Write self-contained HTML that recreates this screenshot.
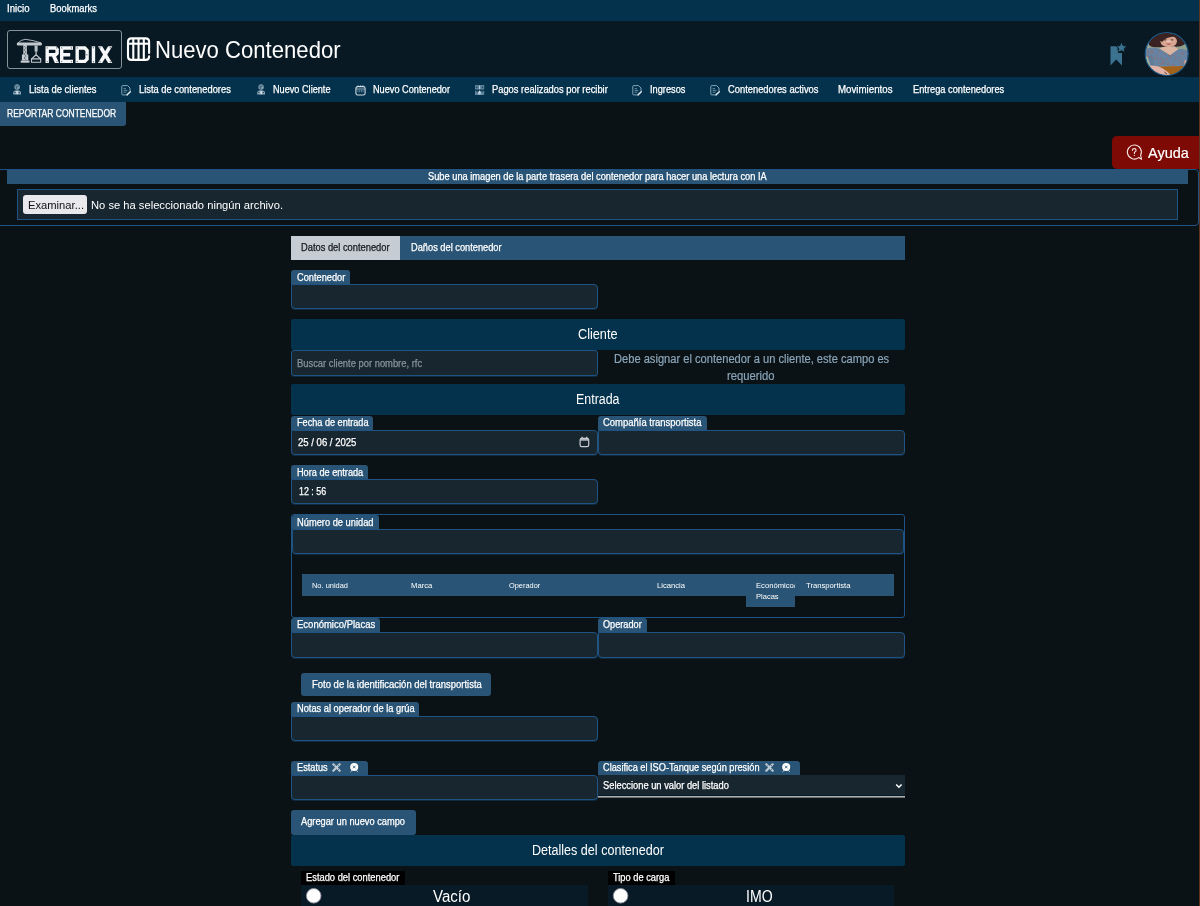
<!DOCTYPE html>
<html lang="es"><head><meta charset="utf-8"><title>Nuevo Contenedor</title>
<style>
html,body{margin:0;padding:0;}
body{width:1200px;height:906px;overflow:hidden;background:#0b1216;font-family:"Liberation Sans",sans-serif;position:relative;}
#p{position:absolute;left:0;top:0;width:1200px;height:906px;overflow:hidden;}
#p>div{position:absolute;box-sizing:border-box;}
#p>svg{position:absolute;overflow:visible;}
.t{position:absolute;white-space:nowrap;transform-origin:0 50%;font-family:"Liberation Sans",sans-serif;}
</style></head><body><div id="p">
<div style="left:0px;top:0px;width:1200px;height:21px;background:#04324c;"></div>
<div style="left:0px;top:21px;width:1200px;height:57px;background:#081924;"></div>
<div style="left:0px;top:77px;width:1200px;height:25px;background:#04324c;"></div>
<div style="left:0px;top:102px;width:126px;height:24px;background:#295475;border-radius:0 0 3px 0;"></div>
<div style="left:7px;top:30px;width:115px;height:39px;background:transparent;border:1px solid #87929a;border-radius:3px;"></div>
<div style="left:1112px;top:136px;width:87px;height:33px;background:#7d0a04;border-radius:5px 0 0 5px;"></div>
<div style="left:-2px;top:169px;width:1201px;height:57px;background:transparent;border:1px solid #1f5383;border-radius:0 4px 4px 0;"></div>
<div style="left:7px;top:170px;width:1181px;height:14px;background:#295475;"></div>
<div style="left:17px;top:189px;width:1161px;height:31px;background:#182630;border:1px solid #1f5383;"></div>
<div style="left:23px;top:195px;width:64px;height:19px;background:#e9e9ed;border-radius:3px;"></div>
<div style="left:291px;top:236px;width:614px;height:24px;background:#295475;"></div>
<div style="left:291px;top:236px;width:109px;height:24px;background:#c6ccd4;"></div>
<div style="left:291px;top:270px;width:59px;height:14px;background:#295475;border-radius:3px 3px 0 0;"></div>
<div style="left:291px;top:284px;width:307px;height:25px;background:#182630;border:1px solid #1f5383;border-radius:0px 4px 4px 4px;box-shadow:0 1px 0 0 rgba(31,85,134,0.35);"></div>
<div style="left:291px;top:319px;width:614px;height:31px;background:#04324c;border-radius:2px;"></div>
<div style="left:291px;top:350px;width:307px;height:26px;background:#182630;border:1px solid #1f5383;border-radius:3px 3px 3px 3px;box-shadow:0 1px 0 0 rgba(31,85,134,0.35);"></div>
<div style="left:291px;top:384px;width:614px;height:31px;background:#04324c;border-radius:2px;"></div>
<div style="left:291px;top:416px;width:82px;height:14px;background:#295475;border-radius:3px 3px 0 0;"></div>
<div style="left:291px;top:430px;width:307px;height:25px;background:#182630;border:1px solid #1f5383;border-radius:0px 4px 4px 4px;box-shadow:0 1px 0 0 rgba(31,85,134,0.35);"></div>
<div style="left:598px;top:416px;width:108.5px;height:14px;background:#295475;border-radius:3px 3px 0 0;"></div>
<div style="left:598px;top:430px;width:307px;height:25px;background:#182630;border:1px solid #1f5383;border-radius:0px 4px 4px 4px;box-shadow:0 1px 0 0 rgba(31,85,134,0.35);"></div>
<div style="left:291px;top:465px;width:77px;height:14px;background:#295475;border-radius:3px 3px 0 0;"></div>
<div style="left:291px;top:479px;width:307px;height:25px;background:#182630;border:1px solid #1f5383;border-radius:0px 4px 4px 4px;box-shadow:0 1px 0 0 rgba(31,85,134,0.35);"></div>
<div style="left:291px;top:514px;width:614px;height:104px;background:transparent;border:1px solid #1f5383;border-radius:3px;"></div>
<div style="left:292px;top:515px;width:86.7px;height:14px;background:#295475;border-radius:3px 3px 0 0;"></div>
<div style="left:292px;top:529px;width:612px;height:25px;background:#182630;border:1px solid #1f5383;border-radius:0px 4px 4px 4px;box-shadow:0 1px 0 0 rgba(31,85,134,0.35);"></div>
<div style="left:302px;top:574px;width:592px;height:22px;background:#295475;"></div>
<div style="left:745.5px;top:574px;width:49.3px;height:33px;background:#295475;"></div>
<div style="left:291px;top:618px;width:89px;height:14px;background:#295475;border-radius:3px 3px 0 0;"></div>
<div style="left:291px;top:632px;width:307px;height:26px;background:#182630;border:1px solid #1f5383;border-radius:0px 4px 4px 4px;box-shadow:0 1px 0 0 rgba(31,85,134,0.35);"></div>
<div style="left:598px;top:618px;width:48.5px;height:14px;background:#295475;border-radius:3px 3px 0 0;"></div>
<div style="left:598px;top:632px;width:307px;height:26px;background:#182630;border:1px solid #1f5383;border-radius:0px 4px 4px 4px;box-shadow:0 1px 0 0 rgba(31,85,134,0.35);"></div>
<div style="left:301px;top:673px;width:190px;height:23px;background:#295475;border-radius:3px;"></div>
<div style="left:291px;top:702px;width:128.2px;height:14px;background:#295475;border-radius:3px 3px 0 0;"></div>
<div style="left:291px;top:716px;width:307px;height:25px;background:#182630;border:1px solid #1f5383;border-radius:0px 4px 4px 4px;box-shadow:0 1px 0 0 rgba(31,85,134,0.35);"></div>
<div style="left:291px;top:761px;width:76.5px;height:14px;background:#295475;border-radius:3px 3px 0 0;"></div>
<div style="left:291px;top:775px;width:307px;height:25px;background:#182630;border:1px solid #1f5383;border-radius:0px 4px 4px 4px;box-shadow:0 1px 0 0 rgba(31,85,134,0.35);"></div>
<div style="left:598px;top:761px;width:202px;height:14px;background:#295475;border-radius:3px 3px 0 0;"></div>
<div style="left:598px;top:775px;width:307px;height:20px;background:#182630;"></div>
<div style="left:598px;top:795px;width:307px;height:1px;background:#061a28;"></div>
<div style="left:598px;top:796px;width:307px;height:1px;background:#a9abad;"></div>
<div style="left:598px;top:797px;width:307px;height:1px;background:#6f7274;"></div>
<div style="left:291px;top:810px;width:124.5px;height:24.5px;background:#295475;border-radius:3px;"></div>
<div style="left:291px;top:835px;width:614px;height:31px;background:#04324c;border-radius:2px;"></div>
<div style="left:301px;top:871px;width:104px;height:14px;background:#000;"></div>
<div style="left:301px;top:885px;width:287px;height:21px;background:#081a26;"></div>
<div style="left:608px;top:871px;width:67px;height:14px;background:#000;"></div>
<div style="left:608px;top:885px;width:286px;height:21px;background:#081a26;"></div>
<div style="left:1199px;top:0px;width:1px;height:906px;background:#5e3420;"></div>
<svg style="left:0px;top:0px" width="60" height="80" viewBox="0 0 60 80">
<g fill="none" stroke="#c3c9ce" stroke-linecap="round" stroke-linejoin="round">
<path d="M18.2,44.1 H40.5" stroke-width="3"/>
<path d="M17.8,43 Q21,39.6 25.3,39.3 Q33,40.2 40.8,42.8" stroke-width="0.9"/>
<path d="M25.1,45 V60" stroke-width="3.6" stroke-linecap="butt"/>
<path d="M25.1,54.5 V60.5" stroke-width="6.4" stroke-linecap="butt"/>
<path d="M21.6,61.7 H28.6" stroke-width="2.2"/>
<path d="M36.1,45.5 V51.5" stroke-width="3" stroke-linecap="butt" stroke="#b9c0c5"/>
<path d="M36.1,51.5 L36.1,54.8 M36.1,54.8 L31.6,58.9 M36.1,54.8 L40.6,58.9" stroke-width="1.2"/>
<rect x="31.5" y="58.9" width="9.2" height="3.4" stroke-width="1.1"/>
</g>
<g stroke="#0a1a24" stroke-width="0.6" fill="none" opacity="0.75">
<path d="M24,46 L26.2,48 L24,50 L26.2,52 L24,54 L26.2,56 L24,58 L26.2,60"/>
</g></svg>
<svg style="left:0px;top:0px" width="125" height="80" viewBox="0 0 125 80">
<g fill="none" stroke="#f6f7f8" stroke-width="3.4" stroke-linejoin="miter" stroke-linecap="butt">
<path d="M47.2,63.1 V48 H55.6 L57.1,49.5 V53.2 L55.6,54.7 H48"/>
<path d="M73,48 H61.7 V61.4 H73 M62,54.7 H70.2" />
<path d="M77.2,48 H84.8 L87.1,50.4 V59 L84.8,61.4 H77.2 Z"/>
<path d="M93.45,46.3 V63.1"/>
</g>
<g fill="#f6f7f8">
<polygon points="51.6,55.5 55.6,55.5 59,63.1 54.8,63.1"/>
<polygon points="98,46.3 102.2,46.3 112.3,63.1 108.1,63.1"/>
<polygon points="112.3,46.3 108.1,46.3 98,63.1 102.2,63.1"/>
</g>
<g fill="#66727b">
<circle cx="47.2" cy="47.9" r="0.7"/><circle cx="47.2" cy="61.6" r="0.7"/><circle cx="56.6" cy="47.9" r="0.7"/><circle cx="57" cy="61.6" r="0.7"/>
<circle cx="61.7" cy="47.9" r="0.7"/><circle cx="61.7" cy="61.6" r="0.7"/><circle cx="71.5" cy="47.9" r="0.7"/><circle cx="71.5" cy="61.6" r="0.7"/>
<circle cx="77.2" cy="47.9" r="0.7"/><circle cx="77.2" cy="61.6" r="0.7"/><circle cx="86.9" cy="54.7" r="0.7"/>
<circle cx="93.45" cy="47.7" r="0.7"/><circle cx="93.45" cy="61.7" r="0.7"/>
<circle cx="100" cy="47.7" r="0.7"/><circle cx="110.3" cy="47.7" r="0.7"/><circle cx="100" cy="61.7" r="0.7"/><circle cx="110.3" cy="61.7" r="0.7"/>
</g></svg>
<svg style="left:0px;top:0px" width="160" height="80" viewBox="0 0 160 80"><g fill="none" stroke="#fff" stroke-width="2.1" stroke-linecap="round">
<path d="M149.1,53 V41.9 Q149.1,38.4 145.6,38.4 H131.5 Q128,38.4 128,41.9 V56.4 Q128,59.9 131.5,59.9 H145.6 Q149.1,59.9 149.1,56.4 V56.2"/>
<path d="M128.5,43.7 H148.6" stroke-linecap="butt"/>
<path d="M133.3,39 V59.3 M138.55,39 V59.3 M143.8,39 V59.3" stroke-linecap="butt"/>
</g></svg>
<svg style="left:0px;top:0px" width="1200" height="80" viewBox="0 0 1200 80"><g fill="#3b728f">
<path d="M1110.5,46.3 H1117 L1118.5,53 L1122,53 V65.5 L1116.2,59.5 L1110.5,65.5 Z"/>
<polygon points="1121.5,42.2 1123.1,45.7 1126.9,46.1 1124.1,48.7 1124.9,52.5 1121.5,50.6 1118.1,52.5 1118.9,48.7 1116.1,46.1 1119.9,45.7" stroke="#091a25" stroke-width="0.8"/>
</g></svg>
<svg style="left:12.8px;top:84.1px" width="9" height="11" viewBox="0 0 9 11"><g fill="#a9c0cf"><ellipse cx="4.1" cy="3" rx="2.75" ry="2.7" fill-opacity="0.8"/><path d="M0.2,10.5 V8.9 Q0.2,6.5 4.1,6.3 Q8,6.5 8,8.9 V10.5 Z" fill-opacity="0.85"/></g><path d="M1.8,2.1 H6.4" stroke="#04324c" stroke-width="0.8" stroke-opacity="0.8"/><g fill="#04324c" fill-opacity="0.75"><circle cx="3.5" cy="3.9" r="0.8"/><circle cx="1.8" cy="8.4" r="0.75"/><circle cx="6.3" cy="8.4" r="0.75"/></g><path d="M4.1,7 V10.2" stroke="#eef3f6" stroke-width="1.1"/></svg>
<svg style="left:121px;top:84.8px" width="10" height="11" viewBox="0 0 10 11"><g fill="none" stroke="#8fb0c4" stroke-width="0.9" stroke-linejoin="round"><path d="M5.2,9.9 H1.6 Q0.8,9.9 0.8,9.1 V1.4 Q0.8,0.6 1.6,0.6 H6.6 L9,3 V6.3"/><path d="M2.6,3.6 H5 M2.6,5.4 H6.4 M2.6,7.2 H5.4" stroke-width="0.8" stroke="#7fa2b8"/></g><path d="M6,9.9 L9.3,6.8" stroke="#dfe8ee" stroke-width="1.5" stroke-linecap="round"/></svg>
<svg style="left:256.8px;top:84.1px" width="9" height="11" viewBox="0 0 9 11"><g fill="#a9c0cf"><ellipse cx="4.1" cy="3" rx="2.75" ry="2.7" fill-opacity="0.8"/><path d="M0.2,10.5 V8.9 Q0.2,6.5 4.1,6.3 Q8,6.5 8,8.9 V10.5 Z" fill-opacity="0.85"/></g><path d="M1.8,2.1 H6.4" stroke="#04324c" stroke-width="0.8" stroke-opacity="0.8"/><g fill="#04324c" fill-opacity="0.75"><circle cx="3.5" cy="3.9" r="0.8"/><circle cx="1.8" cy="8.4" r="0.75"/><circle cx="6.3" cy="8.4" r="0.75"/></g><path d="M4.1,7 V10.2" stroke="#eef3f6" stroke-width="1.1"/></svg>
<svg style="left:354.5px;top:84.8px" width="11" height="11" viewBox="0 0 11 11"><g fill="none" stroke="#cfdae2" stroke-width="1.1"><rect x="0.9" y="1.6" width="9.2" height="8.4" rx="1.8"/><path d="M1,4 H10" stroke-width="0.9" stroke="#a9bccb"/><path d="M3.1,0.4 V2 M5.5,0.4 V2 M7.9,0.4 V2" stroke-width="1.2"/></g><path d="M3,5 V7.3 M4.7,5 V7.3 M6.4,5 V7.3 M8,5 V7.3" stroke="#6f95ad" stroke-width="0.8"/></svg>
<svg style="left:474.9px;top:85px" width="10" height="10" viewBox="0 0 10 10"><g fill="#7fa3ba" fill-opacity="0.75"><rect x="0" y="0.1" width="9.2" height="4.4"/><rect x="0" y="5.9" width="9.2" height="4"/></g><g fill="#03314b" fill-opacity="0.7"><circle cx="1.7" cy="2.3" r="0.9"/><circle cx="7.4" cy="2.3" r="0.9"/><path d="M1.2,6 L3.2,6 L2,8 Z M8,6 L6,6 L7.2,8 Z"/></g><path d="M4.6,0.6 V4.2 M4.6,5.6 V9.6 M3,9.5 L4.6,6.3 L6.2,9.5" stroke="#dbe6ee" stroke-width="0.9" fill="none" stroke-opacity="0.85"/></svg>
<svg style="left:632.3px;top:84.8px" width="10" height="11" viewBox="0 0 10 11"><g fill="none" stroke="#8fb0c4" stroke-width="0.9" stroke-linejoin="round"><path d="M5.2,9.9 H1.6 Q0.8,9.9 0.8,9.1 V1.4 Q0.8,0.6 1.6,0.6 H6.6 L9,3 V6.3"/><path d="M2.6,3.6 H5 M2.6,5.4 H6.4 M2.6,7.2 H5.4" stroke-width="0.8" stroke="#7fa2b8"/></g><path d="M6,9.9 L9.3,6.8" stroke="#dfe8ee" stroke-width="1.5" stroke-linecap="round"/></svg>
<svg style="left:710px;top:84.8px" width="10" height="11" viewBox="0 0 10 11"><g fill="none" stroke="#8fb0c4" stroke-width="0.9" stroke-linejoin="round"><path d="M5.2,9.9 H1.6 Q0.8,9.9 0.8,9.1 V1.4 Q0.8,0.6 1.6,0.6 H6.6 L9,3 V6.3"/><path d="M2.6,3.6 H5 M2.6,5.4 H6.4 M2.6,7.2 H5.4" stroke-width="0.8" stroke="#7fa2b8"/></g><path d="M6,9.9 L9.3,6.8" stroke="#dfe8ee" stroke-width="1.5" stroke-linecap="round"/></svg>
<svg style="left:1126px;top:144px" width="18" height="18" viewBox="0 0 18 18"><g fill="none" stroke="#f7e6e4" stroke-width="1.1" stroke-linecap="round" stroke-linejoin="round"><path d="M12.6,13.6 A7,7 0 1 1 14.6,11.2 L15.6,15.3 Z"/><path d="M6.4,6.4 Q6.5,4.6 8.3,4.6 Q10.1,4.6 10.1,6.2 Q10.1,7.3 8.9,8 Q8.3,8.4 8.3,9.4"/><path d="M8.3,11.3 V11.5"/></g></svg>
<svg style="left:579px;top:436px" width="11" height="12" viewBox="0 0 11 12"><g fill="none" stroke="#c9cdd1"><rect x="1.1" y="2.3" width="8.6" height="8.4" rx="1.6" stroke-width="1.2"/><path d="M1.2,3.9 H9.6" stroke-width="1.5"/><path d="M3.1,0.8 V2.4 M7.7,0.8 V2.4" stroke-width="1.3"/></g></svg>
<svg style="left:331.8px;top:763px" width="9" height="9" viewBox="0 0 9 9"><g stroke="#bfcbd4" stroke-width="2.2" stroke-linecap="round" fill="none"><path d="M1.3,1.3 L7.7,7.7"/><path d="M7.7,1.3 L1.3,7.7"/></g><g fill="#295475"><circle cx="2.7" cy="2.7" r="0.5"/><circle cx="6.3" cy="6.3" r="0.5"/><circle cx="6.6" cy="2.4" r="0.5"/></g></svg>
<svg style="left:349.7px;top:763.2px" width="9" height="9" viewBox="0 0 9 9"><circle cx="4.2" cy="4" r="4" fill="#fff"/><path d="M2.9,2.7 L5.5,5.3 M5.5,2.7 L2.9,5.3" stroke="#4a6f8c" stroke-width="1" /><path d="M0.6,8.6 L2.2,7.4 M7.8,8.6 L6.2,7.4" stroke="#e8eef2" stroke-width="0.9"/></svg>
<svg style="left:764.6px;top:763px" width="9" height="9" viewBox="0 0 9 9"><g stroke="#bfcbd4" stroke-width="2.2" stroke-linecap="round" fill="none"><path d="M1.3,1.3 L7.7,7.7"/><path d="M7.7,1.3 L1.3,7.7"/></g><g fill="#295475"><circle cx="2.7" cy="2.7" r="0.5"/><circle cx="6.3" cy="6.3" r="0.5"/><circle cx="6.6" cy="2.4" r="0.5"/></g></svg>
<svg style="left:782px;top:763.2px" width="9" height="9" viewBox="0 0 9 9"><circle cx="4.2" cy="4" r="4" fill="#fff"/><path d="M2.9,2.7 L5.5,5.3 M5.5,2.7 L2.9,5.3" stroke="#4a6f8c" stroke-width="1" /><path d="M0.6,8.6 L2.2,7.4 M7.8,8.6 L6.2,7.4" stroke="#e8eef2" stroke-width="0.9"/></svg>
<svg style="left:895px;top:783px" width="8" height="6" viewBox="0 0 8 6"><path d="M1.2,1.5 L3.9,4.2 L6.6,1.5" fill="none" stroke="#fff" stroke-width="1.5"/></svg>
<svg style="left:1140px;top:28px" width="54" height="54" viewBox="0 0 54 54">
<defs><clipPath id="avc"><circle cx="26.7" cy="26" r="21.3"/></clipPath>
<clipPath id="blc"><path d="M4,21.5 C9,19.5 16,19.3 20,21 L30,27.3 L38,21.5 C42,20.3 46,21.5 50,24 L50,38.3 L4,38.6 Z"/></clipPath>
<filter id="avb" x="-10%" y="-10%" width="120%" height="120%"><feGaussianBlur stdDeviation="0.55"/></filter></defs>
<g clip-path="url(#avc)"><g filter="url(#avb)">
<rect x="0" y="0" width="54" height="54" fill="#97a596"/>
<rect x="36" y="14" width="16" height="9" fill="#8ea18b"/>
<path d="M9,16.5 C8.5,10 14,5.2 24,4.8 C34,4.4 42,8 45.3,15.3 C44,18.2 38,19 34,18.5 L20,19.2 C15,19.6 10,19.3 9,16.5 Z" fill="#3a2421"/>
<ellipse cx="28.7" cy="13.2" rx="8.3" ry="6" fill="#d6a692"/>
<path d="M19.5,13 C20,6.5 29,5.2 37,8.6 C31.5,8.6 26,9.2 22.4,13.8 Z" fill="#3a2421"/>
<path d="M36.8,9 C38.5,11 38.3,15 36.6,17.5 C37.5,14 37.3,11.5 36.8,9 Z" fill="#3a2421"/>
<ellipse cx="25.3" cy="11.8" rx="1.5" ry="0.6" fill="#5a3a33"/><ellipse cx="32" cy="11.8" rx="1.5" ry="0.6" fill="#5a3a33"/>
<ellipse cx="28.6" cy="13.3" rx="2.6" ry="1" fill="#e6c3b8"/>
<ellipse cx="28.7" cy="16.1" rx="2.4" ry="0.9" fill="#c06a62"/>
<path d="M22.5,19 L34.5,18.6 L38.5,21.6 L30,27.6 L19.5,21 Z" fill="#dcb4a2"/>
<path d="M4,21.5 C9,19.5 16,19.3 20,21 L30,27.3 L38,21.5 C42,20.3 46,21.5 50,24 L50,38.3 L4,38.6 Z" fill="#6783a1"/>
<path d="M4,30 L12,27 L14,38.6 L4,38.6 Z" fill="#5b7796" opacity="0.7"/>
<g clip-path="url(#blc)" fill="#ab6152" opacity="0.85"><circle cx="19.2" cy="23.1" r="0.6"/><circle cx="33.6" cy="21.8" r="0.6"/><circle cx="28.6" cy="26.9" r="0.6"/><circle cx="7.6" cy="29.4" r="0.6"/><circle cx="6.6" cy="28.1" r="0.6"/><circle cx="8.1" cy="22.1" r="0.6"/><circle cx="23.7" cy="35.0" r="0.6"/><circle cx="10.4" cy="24.4" r="0.6"/><circle cx="32.6" cy="37.1" r="0.6"/><circle cx="30.4" cy="27.4" r="0.6"/><circle cx="48.0" cy="21.3" r="0.6"/><circle cx="42.8" cy="25.6" r="0.6"/><circle cx="11.3" cy="22.6" r="0.6"/><circle cx="18.6" cy="34.8" r="0.6"/><circle cx="13.0" cy="30.7" r="0.6"/><circle cx="33.1" cy="27.0" r="0.6"/><circle cx="29.1" cy="21.6" r="0.6"/><circle cx="7.6" cy="24.1" r="0.6"/><circle cx="34.9" cy="28.0" r="0.6"/><circle cx="18.8" cy="30.7" r="0.6"/><circle cx="24.9" cy="25.7" r="0.6"/><circle cx="40.0" cy="32.7" r="0.6"/><circle cx="15.7" cy="30.6" r="0.6"/><circle cx="28.1" cy="35.8" r="0.6"/><circle cx="37.1" cy="25.5" r="0.6"/><circle cx="48.1" cy="22.6" r="0.6"/><circle cx="23.4" cy="33.7" r="0.6"/><circle cx="11.7" cy="29.1" r="0.6"/><circle cx="6.7" cy="32.2" r="0.6"/><circle cx="38.6" cy="30.5" r="0.6"/><circle cx="43.5" cy="26.0" r="0.6"/><circle cx="35.6" cy="30.9" r="0.6"/><circle cx="30.5" cy="28.5" r="0.6"/><circle cx="42.0" cy="37.0" r="0.6"/><circle cx="25.9" cy="32.1" r="0.6"/><circle cx="7.7" cy="32.8" r="0.6"/><circle cx="33.5" cy="37.9" r="0.6"/><circle cx="41.2" cy="25.5" r="0.6"/><circle cx="22.0" cy="32.2" r="0.6"/><circle cx="6.0" cy="28.6" r="0.6"/><circle cx="12.4" cy="22.5" r="0.6"/><circle cx="7.6" cy="33.9" r="0.6"/><circle cx="10.7" cy="24.8" r="0.6"/><circle cx="22.2" cy="35.7" r="0.6"/><circle cx="8.5" cy="28.4" r="0.6"/><circle cx="29.2" cy="36.0" r="0.6"/><circle cx="41.0" cy="35.6" r="0.6"/><circle cx="17.3" cy="27.8" r="0.6"/><circle cx="20.8" cy="36.0" r="0.6"/><circle cx="47.1" cy="23.1" r="0.6"/><circle cx="12.8" cy="24.6" r="0.6"/><circle cx="15.3" cy="29.0" r="0.6"/><circle cx="30.9" cy="25.1" r="0.6"/><circle cx="5.2" cy="27.8" r="0.6"/><circle cx="21.2" cy="30.4" r="0.6"/><circle cx="46.9" cy="32.6" r="0.6"/><circle cx="27.7" cy="31.3" r="0.6"/><circle cx="34.8" cy="21.4" r="0.6"/><circle cx="44.6" cy="34.1" r="0.6"/><circle cx="43.5" cy="34.5" r="0.6"/></g>
<path d="M5,29 L7.5,28.5 L10.5,37.5 L8,38 Z" fill="#a3b49f"/>
<path d="M44.5,32.5 L47.5,31.5 L47,38 L44.2,38.5 Z" fill="#d9a794"/>
<path d="M19,38.6 L43.5,38 L42.5,41.5 L31.5,47.5 L27,44 Z" fill="#a3621c"/>
<path d="M9.5,37.6 C14,37.2 19,38.5 22.5,40.2 C26,42.3 29.5,45 30.5,47.5 L20,47.5 C15,45.5 11,42 9.5,37.6 Z" fill="#e2b4a7"/>
<path d="M24.5,44 L27,46.3" stroke="#3b2a25" stroke-width="0.9"/>
</g></g>
<circle cx="26.7" cy="26" r="21.5" fill="none" stroke="#1d5985" stroke-width="1.1"/></svg>
<svg style="left:0;top:880px" width="1200" height="26" viewBox="0 880 1200 26"><g fill="#fff" stroke="#8f8f9d" stroke-width="0.9"><circle cx="313.7" cy="895.8" r="7.3"/><circle cx="620.6" cy="895.8" r="7.3"/></g></svg>
<span class="t" style="left:296.5px;top:272.94px;font-size:10px;line-height:10px;color:#fff;transform:scaleX(0.9241);-webkit-text-stroke:0.25px currentColor;">Contenedor</span>
<span class="t" style="left:296.5px;top:417.94px;font-size:10px;line-height:10px;color:#fff;transform:scaleX(0.9121);-webkit-text-stroke:0.25px currentColor;">Fecha de entrada</span>
<span class="t" style="left:602.8px;top:417.94px;font-size:10px;line-height:10px;color:#fff;transform:scaleX(0.9466);-webkit-text-stroke:0.25px currentColor;">Compañía transportista</span>
<span class="t" style="left:296.5px;top:467.94px;font-size:10px;line-height:10px;color:#fff;transform:scaleX(0.9159);-webkit-text-stroke:0.25px currentColor;">Hora de entrada</span>
<span class="t" style="left:296.8px;top:517.93px;font-size:10px;line-height:10px;color:#fff;transform:scaleX(0.9297);-webkit-text-stroke:0.25px currentColor;">Número de unidad</span>
<span class="t" style="left:296.5px;top:619.93px;font-size:10px;line-height:10px;color:#fff;transform:scaleX(0.9506);-webkit-text-stroke:0.25px currentColor;">Económico/Placas</span>
<span class="t" style="left:602.8px;top:619.93px;font-size:10px;line-height:10px;color:#fff;transform:scaleX(0.9160);-webkit-text-stroke:0.25px currentColor;">Operador</span>
<span class="t" style="left:296.5px;top:703.93px;font-size:10px;line-height:10px;color:#fff;transform:scaleX(0.9278);-webkit-text-stroke:0.25px currentColor;">Notas al operador de la grúa</span>
<span class="t" style="left:296.5px;top:762.93px;font-size:10px;line-height:10px;color:#fff;transform:scaleX(0.9203);-webkit-text-stroke:0.25px currentColor;">Estatus</span>
<span class="t" style="left:602.8px;top:762.93px;font-size:10px;line-height:10px;color:#fff;transform:scaleX(0.9201);-webkit-text-stroke:0.25px currentColor;">Clasifica el ISO-Tanque según presión</span>
<span class="t" style="left:7px;top:3.94px;font-size:10px;line-height:10px;color:#fff;transform:scaleX(0.9632);-webkit-text-stroke:0.25px currentColor;">Inicio</span>
<span class="t" style="left:49.8px;top:3.94px;font-size:10px;line-height:10px;color:#fff;transform:scaleX(0.9397);-webkit-text-stroke:0.25px currentColor;">Bookmarks</span>
<span class="t" style="left:154.9px;top:38.08px;font-size:24px;line-height:24px;color:#fff;transform:scaleX(0.9212);">Nuevo Contenedor</span>
<span class="t" style="left:28.7px;top:85.44px;font-size:10px;line-height:10px;color:#fff;transform:scaleX(0.9412);-webkit-text-stroke:0.25px currentColor;">Lista de clientes</span>
<span class="t" style="left:138.7px;top:85.44px;font-size:10px;line-height:10px;color:#fff;transform:scaleX(0.9329);-webkit-text-stroke:0.25px currentColor;">Lista de contenedores</span>
<span class="t" style="left:272.5px;top:85.44px;font-size:10px;line-height:10px;color:#fff;transform:scaleX(0.9154);-webkit-text-stroke:0.25px currentColor;">Nuevo Cliente</span>
<span class="t" style="left:372.5px;top:85.44px;font-size:10px;line-height:10px;color:#fff;transform:scaleX(0.9172);-webkit-text-stroke:0.25px currentColor;">Nuevo Contenedor</span>
<span class="t" style="left:491.7px;top:85.44px;font-size:10px;line-height:10px;color:#fff;transform:scaleX(0.9342);-webkit-text-stroke:0.25px currentColor;">Pagos realizados por recibir</span>
<span class="t" style="left:649.5px;top:85.44px;font-size:10px;line-height:10px;color:#fff;transform:scaleX(0.9255);-webkit-text-stroke:0.25px currentColor;">Ingresos</span>
<span class="t" style="left:727.5px;top:85.44px;font-size:10px;line-height:10px;color:#fff;transform:scaleX(0.9356);-webkit-text-stroke:0.25px currentColor;">Contenedores activos</span>
<span class="t" style="left:838px;top:84.94px;font-size:10px;line-height:10px;color:#fff;transform:scaleX(0.9708);-webkit-text-stroke:0.25px currentColor;">Movimientos</span>
<span class="t" style="left:912.5px;top:84.94px;font-size:10px;line-height:10px;color:#fff;transform:scaleX(0.9268);-webkit-text-stroke:0.25px currentColor;">Entrega contenedores</span>
<span class="t" style="left:7px;top:108.94px;font-size:10px;line-height:10px;color:#fff;transform:scaleX(0.8496);-webkit-text-stroke:0.25px currentColor;">REPORTAR CONTENEDOR</span>
<span class="t" style="left:1147.5px;top:144.70px;font-size:15px;line-height:15px;color:#fff;transform:scaleX(0.9653);-webkit-text-stroke:0.2px currentColor;">Ayuda</span>
<span class="t" style="left:428.4px;top:171.74px;font-size:10px;line-height:10px;color:#fff;transform:scaleX(0.9273);-webkit-text-stroke:0.25px currentColor;">Sube una imagen de la parte trasera del contenedor para hacer una lectura con IA</span>
<span class="t" style="left:27.5px;top:199.67px;font-size:11.5px;line-height:11.5px;color:#111;transform:scaleX(0.9734);">Examinar...</span>
<span class="t" style="left:91.1px;top:199.67px;font-size:11.5px;line-height:11.5px;color:#fff;transform:scaleX(0.9719);">No se ha seleccionado ningún archivo.</span>
<span class="t" style="left:301.3px;top:243.13px;font-size:10px;line-height:10px;color:#15191d;transform:scaleX(0.9319);-webkit-text-stroke:0.25px currentColor;">Datos del contenedor</span>
<span class="t" style="left:410.7px;top:243.13px;font-size:10px;line-height:10px;color:#fff;transform:scaleX(0.9258);-webkit-text-stroke:0.25px currentColor;">Daños del contenedor</span>
<span class="t" style="left:578px;top:327.45px;font-size:14px;line-height:14px;color:#fff;transform:scaleX(0.9061);">Cliente</span>
<span class="t" style="left:576px;top:392.45px;font-size:14px;line-height:14px;color:#fff;transform:scaleX(0.8869);">Entrada</span>
<span class="t" style="left:532px;top:843.45px;font-size:14px;line-height:14px;color:#fff;transform:scaleX(0.8973);">Detalles del contenedor</span>
<span class="t" style="left:613.5px;top:353.04px;font-size:12px;line-height:12px;color:#89a4b8;transform:scaleX(0.9270);-webkit-text-stroke:0.2px currentColor;">Debe asignar el contenedor a un cliente, este campo es</span>
<span class="t" style="left:727.3px;top:369.54px;font-size:12px;line-height:12px;color:#89a4b8;transform:scaleX(0.9368);-webkit-text-stroke:0.2px currentColor;">requerido</span>
<span class="t" style="left:296.8px;top:358.94px;font-size:10px;line-height:10px;color:#88939b;transform:scaleX(0.9378);-webkit-text-stroke:0.25px currentColor;">Buscar cliente por nombre, rfc</span>
<span class="t" style="left:298.1px;top:438.13px;font-size:10px;line-height:10px;color:#fff;transform:scaleX(0.9547);-webkit-text-stroke:0.25px currentColor;">25 / 06 / 2025</span>
<span class="t" style="left:298.7px;top:487.44px;font-size:10px;line-height:10px;color:#fff;transform:scaleX(0.8891);-webkit-text-stroke:0.25px currentColor;">12 : 56</span>
<span class="t" style="left:312px;top:581.83px;font-size:8px;line-height:8px;color:#fff;transform:scaleX(0.9302);">No. unidad</span>
<span class="t" style="left:410.7px;top:581.83px;font-size:8px;line-height:8px;color:#fff;transform:scaleX(0.9580);">Marca</span>
<span class="t" style="left:508.8px;top:581.83px;font-size:8px;line-height:8px;color:#fff;transform:scaleX(0.9232);">Operador</span>
<span class="t" style="left:657.2px;top:581.83px;font-size:8px;line-height:8px;color:#fff;transform:scaleX(0.9537);">Licancia</span>
<span class="t" style="left:755.9px;top:581.83px;font-size:8px;line-height:8px;color:#fff;transform:scaleX(0.9546);width:40.75px;overflow:hidden;">Económico/</span>
<span class="t" style="left:755.9px;top:593.33px;font-size:8px;line-height:8px;color:#fff;transform:scaleX(0.9411);">Placas</span>
<span class="t" style="left:805.5px;top:581.83px;font-size:8px;line-height:8px;color:#fff;transform:scaleX(0.9592);">Transportista</span>
<span class="t" style="left:311.5px;top:679.93px;font-size:10px;line-height:10px;color:#fff;transform:scaleX(0.9486);-webkit-text-stroke:0.25px currentColor;">Foto de la identificación del transportista</span>
<span class="t" style="left:301.3px;top:816.93px;font-size:10px;line-height:10px;color:#fff;transform:scaleX(0.9261);-webkit-text-stroke:0.25px currentColor;">Agregar un nuevo campo</span>
<span class="t" style="left:602.8px;top:780.93px;font-size:10px;line-height:10px;color:#fff;transform:scaleX(0.9319);-webkit-text-stroke:0.25px currentColor;">Seleccione un valor del listado</span>
<span class="t" style="left:306.4px;top:872.93px;font-size:10px;line-height:10px;color:#fff;transform:scaleX(0.9333);-webkit-text-stroke:0.25px currentColor;">Estado del contenedor</span>
<span class="t" style="left:613.2px;top:872.93px;font-size:10px;line-height:10px;color:#fff;transform:scaleX(0.9263);-webkit-text-stroke:0.25px currentColor;">Tipo de carga</span>
<span class="t" style="left:433.3px;top:889.26px;font-size:16px;line-height:16px;color:#fff;transform:scaleX(0.9413);">Vacío</span>
<span class="t" style="left:745.5px;top:889.26px;font-size:16px;line-height:16px;color:#fff;transform:scaleX(0.8802);">IMO</span>
</div></body></html>
